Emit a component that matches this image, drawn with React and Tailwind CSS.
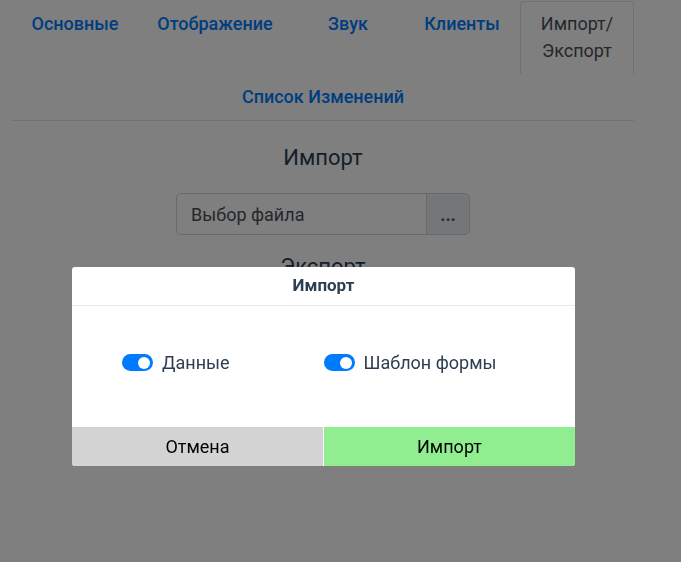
import React, { useState } from 'react';

const tabs = [
  { label: 'Основные', w: 'w-[126px]' },
  { label: 'Отображение', w: 'w-[154px]' },
  { label: 'Звук', w: 'w-[112px]' },
  { label: 'Клиенты', w: 'w-[116px]' },
];

const Switch = ({ checked, onChange, label }) => (
  <label className="flex items-center gap-[9px] cursor-pointer">
    <button
      type="button"
      onClick={() => onChange(!checked)}
      className={`relative w-[31px] h-[17px] rounded-full ${checked ? 'bg-[#007bff]' : 'bg-gray-300'}`}
    >
      <span
        className={`absolute top-[2.5px] w-[12px] h-[12px] rounded-full bg-white ${checked ? 'left-[16px]' : 'left-[3px]'}`}
      />
    </button>
    <span className="text-[18px] text-[#2c3e50]">{label}</span>
  </label>
);

const App = () => {
  const [data, setData] = useState(true);
  const [template, setTemplate] = useState(true);

  return (
    <div className="relative min-h-[562px] bg-white font-['Roboto',sans-serif]">
      <div className="ml-[12px] w-[622px]">
        {/* Tabs */}
        <div className="flex flex-wrap items-start border-b border-[#dee2e6] pt-px text-[18px] leading-[27px]">
          {tabs.map(t => (
            <div key={t.label} className={`${t.w} text-center py-2 border border-transparent font-medium text-[#007bff]`}>
              {t.label}
            </div>
          ))}
          <div className="w-[114px] text-center py-2 border border-b-0 border-[#dee2e6] rounded-t-[4px] text-[#495057] pb-[10px]">
            Импорт/<br />Экспорт
          </div>
          <div className="w-full text-center pt-[9px] pb-[10px] font-medium text-[#007bff]">Список Изменений</div>
        </div>

        {/* Import */}
        <div className="flex flex-col items-center text-[#2c3e50]">
          <h4 className="mt-[24px] text-[22px] leading-[26px] font-normal">Импорт</h4>
          <div className="mt-[22px] flex w-[294px] h-[42px] border border-[#ced4da] rounded-[5px] overflow-hidden text-[18px]">
            <div className="flex-1 flex items-center pl-[14px] text-[#495057]">Выбор файла</div>
            <div className="w-[43px] flex items-center justify-center bg-[#e9ecef] border-l border-[#ced4da] text-[#495057] text-[18px] font-bold">...</div>
          </div>
          <h4 className="mt-[19px] text-[22px] leading-[26px] font-normal">Экспорт</h4>
        </div>
      </div>

      {/* Overlay */}
      <div className="fixed inset-0 bg-black/50">
        <div className="absolute left-[72px] top-[267px] w-[503px] bg-white rounded-[3px] overflow-hidden">
          <div className="h-[39px] flex items-center justify-center border-b border-[#e9ecef] text-[17px] font-bold text-[#2c3e50]">
            Импорт
          </div>
          <div className="h-[121px] grid grid-cols-2 items-center px-[50px] pb-[8px]">
            <Switch checked={data} onChange={setData} label="Данные" />
            <Switch checked={template} onChange={setTemplate} label="Шаблон формы" />
          </div>
          <div className="flex h-[39px] gap-px text-[18px] text-black">
            <button className="flex-1 bg-[#d3d3d3]">Отмена</button>
            <button className="flex-1 bg-[#90ee90]">Импорт</button>
          </div>
        </div>
      </div>
    </div>
  );
};

export default App;
